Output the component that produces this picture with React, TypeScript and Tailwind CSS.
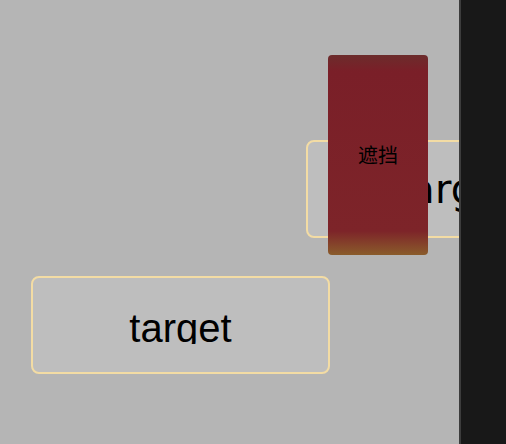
import React from "react";

const Target: React.FC<{ className?: string; clip?: boolean }> = ({ className = "", clip }) => (
    <div
        className={`flex h-[98px] w-[299px] shrink-0 items-center justify-center rounded-lg border-2 border-[#f3dca4] bg-[#bebebe] ${className}`}
    >
        {clip ? (
            <span className="block h-[37px] overflow-hidden pt-[1px] text-[40px] leading-[40px] text-black [font-family:'Liberation_Sans',Arial,sans-serif]">
                target
            </span>
        ) : (
            <span className="text-[40px] leading-none text-black [font-family:'DejaVu_Sans',sans-serif]">
                target
            </span>
        )}
    </div>
);

export default function App() {
    return (
        <div className="flex h-[444px] w-[506px] overflow-hidden bg-[#b5b5b5]">
            <div className="relative flex-1 overflow-hidden">
                <div className="flex flex-col">
                    <Target className="ml-[306px] mt-[140px]" />
                    <Target className="ml-[31px] mt-[38px]" clip />
                </div>
                {/* overlay */}
                <div className="absolute left-[328px] top-[55px] flex h-[200px] w-[100px] items-center justify-center rounded-[4px] bg-[linear-gradient(to_bottom,#6c2c2c_0%,#7a1f28_8%,#7d2429_88%,#8a5c2b_100%)]">
                    <span className="text-[20px] text-black [font-family:'Noto_Sans_CJK_SC',sans-serif]">遮挡</span>
                </div>
            </div>
            <div className="w-[47px] border-l-2 border-[#3c3c3c] bg-[#181818]" />
        </div>
    );
}
